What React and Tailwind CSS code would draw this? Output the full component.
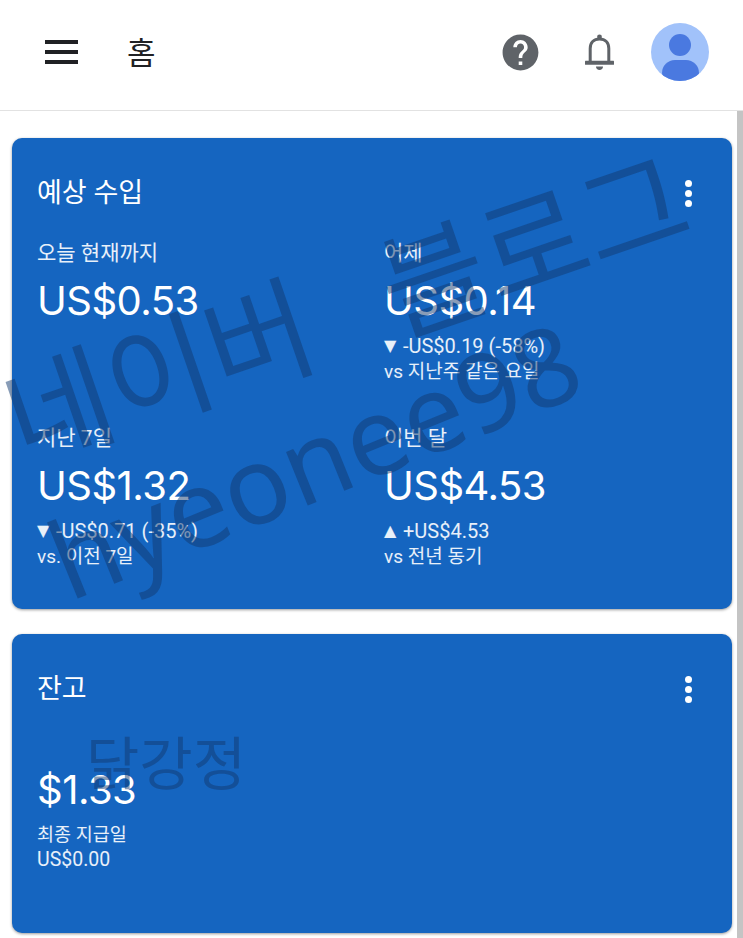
import React from 'react';

const FONT = "font-['Roboto','Noto_Sans_CJK_KR',sans-serif]";

function Dots() {
    return (
        <div className="flex flex-col gap-[3px] pt-[1px]">
            <span className="w-[7px] h-[7px] rounded-full bg-white" />
            <span className="w-[7px] h-[7px] rounded-full bg-white" />
            <span className="w-[7px] h-[7px] rounded-full bg-white" />
        </div>
    );
}

function Stat({ label, value, arrow, delta, note }) {
    return (
        <div className="h-[185px]">
            <p className="text-[21px] leading-[26px] text-white/90">{label}</p>
            <p className="mt-[10px] font-['Inter',sans-serif] text-[40px] leading-[50px] tracking-[-0.5px] text-white">{value}</p>
            {delta && (
                <p className="mt-[7px] flex items-center text-[20px] leading-[26px] text-white/90">
                    <span className="w-[19px] font-['DejaVu_Sans',sans-serif] text-[16px]">{arrow}</span>
                    {delta}
                </p>
            )}
            {note && <p className="text-[19px] leading-[25px] text-white/90">{note}</p>}
        </div>
    );
}

export default function App() {
    return (
        <div className={`relative h-[938px] overflow-hidden bg-white ${FONT}`}>
            {/* Top bar */}
            <header className="h-[111px] flex items-center border-b border-[#e2e2e2] pl-[45px] pr-[34px] pb-[6px]">
                <div className="flex flex-col gap-[6.5px]">
                    <span className="block w-[33px] h-[3.5px] bg-[#202124]" />
                    <span className="block w-[33px] h-[3.5px] bg-[#202124]" />
                    <span className="block w-[33px] h-[3.5px] bg-[#202124]" />
                </div>
                <h1 className="ml-[49px] mt-[3px] text-[31px] leading-none text-[#202124]">홈</h1>
                <div className="ml-auto flex items-center">
                    <svg viewBox="0 0 24 24" className="w-[43px] h-[43px] fill-[#5f6368]">
                        <path d="M12 2C6.48 2 2 6.48 2 12s4.48 10 10 10 10-4.48 10-10S17.52 2 12 2zm1 17h-2v-2h2v2zm2.07-7.75l-.9.92C13.45 12.9 13 13.5 13 15h-2v-.5c0-1.1.45-2.1 1.17-2.83l1.24-1.26c.37-.36.59-.86.59-1.41 0-1.1-.9-2-2-2s-2 .9-2 2H8c0-2.21 1.79-4 4-4s4 1.79 4 4c0 .88-.36 1.68-.93 2.25z" />
                    </svg>
                    <svg viewBox="0 0 29 36" className="ml-[43px] w-[29px] h-[36px]">
                        <circle cx="14.5" cy="3" r="2.4" fill="#5f6368" />
                        <path d="M5.2 28V14.500C5.200 8.500 8.800 5 14.500 5S23.800 8.500 23.800 14.500V28" fill="none" stroke="#5f6368" strokeWidth="3" />
                        <rect x="0" y="26.700" width="29" height="4" rx="0.5" fill="#5f6368" />
                        <path d="M11 32.500h7c0 2-1.500 3.500-3.500 3.500S11 34.500 11 32.500z" fill="#5f6368" />
                    </svg>
                    <div className="ml-[37px] relative w-[58px] h-[58px] rounded-full bg-[#a1c2fa] overflow-hidden">
                        <span className="absolute left-[18px] top-[11px] w-[22px] h-[22px] rounded-full bg-[#4a79e0]" />
                        <span className="absolute left-[10.500px] top-[37px] w-[37px] h-[26px] rounded-full bg-[#4a79e0]" />
                    </div>
                </div>
            </header>

            <main className="pl-[12px] pr-[11px] pt-[27px] flex flex-col gap-[25px] text-white">
                {/* Estimated revenue */}
                <section className="h-[471px] rounded-[10px] bg-[#1565c0] shadow-[0_1px_3px_rgba(0,0,0,0.4)] pl-[25px] pr-[40px] pt-[38px]">
                    <div className="flex items-center justify-between">
                        <h2 className="text-[27px] leading-[34px]">예상 수입</h2>
                        <Dots />
                    </div>
                    <div className="mt-[30px] grid grid-cols-[347px_1fr]">
                        <Stat label="오늘 현재까지" value="US$0.53" />
                        <Stat label="어제" value="US$0.14" arrow="▼" delta="-US$0.19 (-58%)" note="vs 지난주 같은 요일" />
                        <Stat label="지난 7일" value="US$1.32" arrow="▼" delta="-US$0.71 (-35%)" note="vs. 이전 7일" />
                        <Stat label="이번 달" value="US$4.53" arrow="▲" delta="+US$4.53" note="vs 전년 동기" />
                    </div>
                </section>

                {/* Balance */}
                <section className="h-[299px] rounded-[10px] bg-[#1565c0] shadow-[0_1px_3px_rgba(0,0,0,0.4)] pl-[25px] pr-[40px] pt-[38px]">
                    <div className="flex items-center justify-between">
                        <h2 className="text-[27px] leading-[34px]">잔고</h2>
                        <Dots />
                    </div>
                    <p className="mt-[59px] font-['Inter',sans-serif] text-[40px] leading-[50px] tracking-[-0.5px]">$1.33</p>
                    <p className="mt-[7px] text-[18.500px] leading-[26px] text-white/90">최종 지급일</p>
                    <p className="text-[19.500px] leading-[24px] text-white/90">US$0.00</p>
                </section>
            </main>

            {/* Scrollbar */}
            <div className="absolute right-0 top-[111px] bottom-0 w-[6px] bg-[#c4c4c4]" />

            {/* Watermarks laid over the page */}
            <div className="absolute left-[10px] top-[370px] whitespace-nowrap origin-left -rotate-[19deg] text-[115px] [word-spacing:50px] leading-none text-[#123a70]/50 pointer-events-none">네이버 블로그</div>
            <div className="absolute left-[54px] top-[510px] whitespace-nowrap origin-left -rotate-[22deg] font-['Noto_Sans',sans-serif] text-[108px] leading-none text-[#123a70]/50 pointer-events-none">hyeonee98</div>
            <div className="absolute left-[86px] top-[736px] whitespace-nowrap text-[58px] leading-none text-[#123a70]/50 pointer-events-none">닭강정</div>
        </div>
    );
}
